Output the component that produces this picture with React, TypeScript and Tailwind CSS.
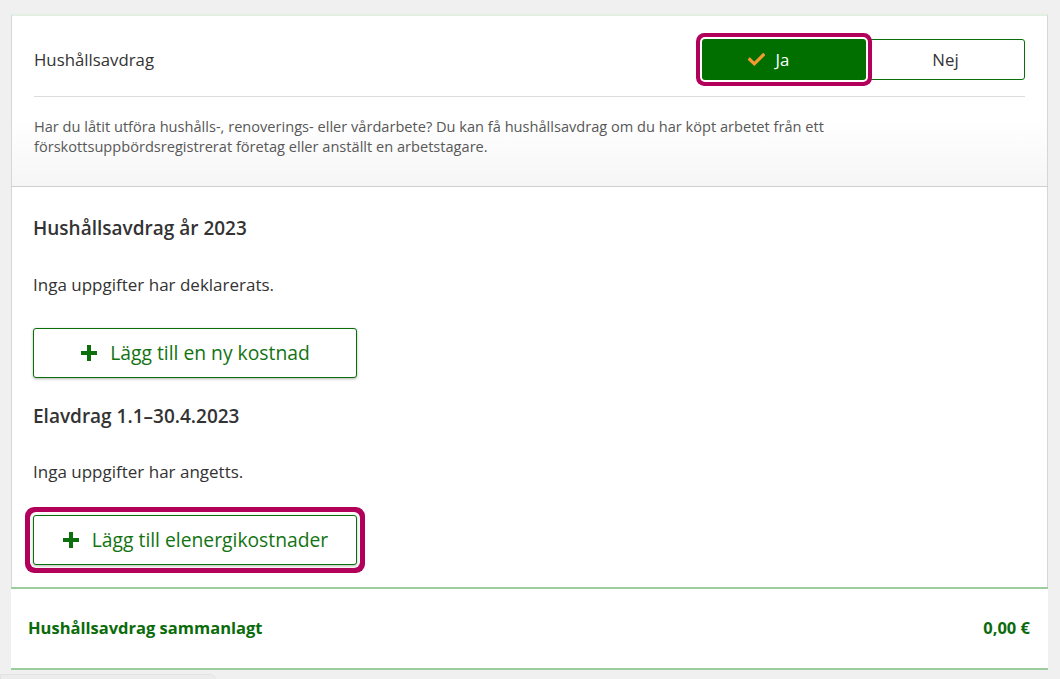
const font = { fontFamily: '"Open Sans", "Noto Sans", sans-serif' };

function CheckIcon() {
  return (
    <svg width="17" height="13" viewBox="0 0 17 13" aria-hidden="true">
      <polyline
        points="1.8,6.5 6.3,10.8 15.2,2"
        fill="none"
        stroke="#f39a2e"
        strokeWidth="3.2"
        strokeLinecap="square"
      />
    </svg>
  );
}

function PlusIcon() {
  return (
    <svg width="18" height="18" viewBox="0 0 18 18" aria-hidden="true">
      <path d="M9 1v16M1 9h16" stroke="#0b700b" strokeWidth="4" />
    </svg>
  );
}

function AddButton({ label, focused }: { label: string; focused?: boolean }) {
  return (
    <button
      className={
        'flex h-[50px] w-[324px] items-center justify-center gap-3 rounded-[3px] border border-[#0a6f0a] bg-white text-[19.3px] text-[#137313] ' +
        (focused
          ? 'shadow-[0_1px_3px_rgba(0,0,0,0.3),0_0_0_3px_#ffffff,0_0_0_8px_#b2005a]'
          : 'shadow-[0_1px_3px_rgba(0,0,0,0.3)]')
      }
    >
      <PlusIcon />
      <span>{label}</span>
    </button>
  );
}

export default function App() {
  return (
    <div className="h-[679px] w-full overflow-hidden bg-[#f0f0f0] pl-[11px] pt-[14px]" style={font}>
      <div className="w-[1037px]">
        {/* Header: toggle + help text */}
        <div className="border-x border-t-2 border-b border-x-[#d6d6d6] border-t-[#e4efe4] border-b-[#cfcfcf] bg-gradient-to-b from-white from-60% to-[#f6f6f6] px-[22px]">
          <div className="flex items-center justify-between pb-[16px] pt-[23px]">
            <span className="text-[16.8px] text-[#333]">Hushållsavdrag</span>
            <div className="flex">
              <button className="relative z-10 flex h-[41px] w-[164px] items-center justify-center gap-[11px] rounded-[3px] bg-[#006f00] pr-[31px] text-[16.8px] text-white shadow-[0_0_0_2px_#ffffff,0_0_0_6px_#b2005a]">
                <CheckIcon />
                <span>Ja</span>
              </button>
              <button className="flex h-[41px] w-[159px] items-center justify-center rounded-r-[3px] border border-[#0a6f0a] bg-white text-[16.8px] text-[#333]">
                Nej
              </button>
            </div>
          </div>
          <div className="h-px bg-[#dcdcdc]" />
          <p className="pb-[30px] pt-[19px] text-[14.6px] leading-[20px] text-[#585858]">
            Har du låtit utföra hushålls-, renoverings- eller vårdarbete? Du kan få hushållsavdrag om du har köpt arbetet från ett
            <br />
            förskottsuppbördsregistrerat företag eller anställt en arbetstagare.
          </p>
        </div>

        {/* Body */}
        <div className="border-x border-[#d6d6d6] bg-white px-[21px] pb-[22px] pt-[28px]">
          <h3 className="text-[19px] font-semibold leading-[26px] text-[#333]">Hushållsavdrag år 2023</h3>
          <p className="mt-[32px] text-[17px] leading-[24px] text-[#333]">Inga uppgifter har deklarerats.</p>
          <div className="mt-[31px]">
            <AddButton label="Lägg till en ny kostnad" />
          </div>
          <h3 className="mt-[25px] text-[19px] font-semibold leading-[26px] text-[#333]">Elavdrag 1.1–30.4.2023</h3>
          <p className="mt-[31px] text-[17px] leading-[24px] text-[#333]">Inga uppgifter har angetts.</p>
          <div className="mt-[31px]">
            <AddButton label="Lägg till elenergikostnader" focused />
          </div>
        </div>

        {/* Total */}
        <div className="flex h-[83px] items-center justify-between border-y-2 border-[#9ccd9c] bg-white pl-[17px] pr-[18px] text-[16.5px] font-bold text-[#0a6b0a]">
          <span>Hushållsavdrag sammanlagt</span>
          <span>0,00 €</span>
        </div>
      </div>
      <div className="-ml-[11px] mt-[4px] h-[8px] w-[216px] rounded-tr-[6px] border border-[#e2e2e2] bg-[#ececec]" />
    </div>
  );
}
